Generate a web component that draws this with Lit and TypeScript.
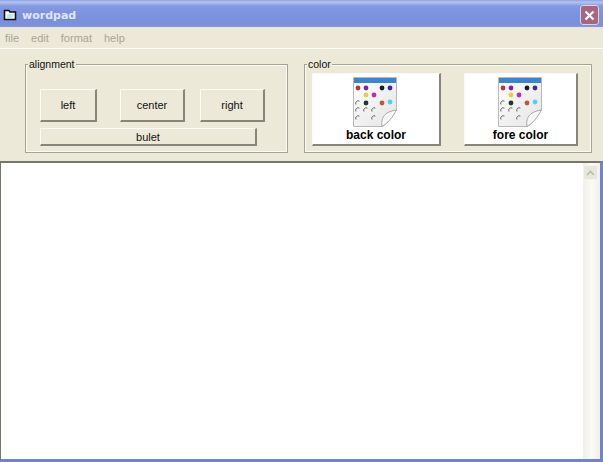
import { LitElement, html, css, svg } from "lit";
import { customElement } from "lit/decorators.js";

const dots = [
  [6, 11, "#b03a3a"], [14, 11, "#7a22b0"], [30, 11, "#1a1a1a"], [38, 11, "#3a2aa0"],
  [14, 18, "#e8cf3a"], [22, 18, "#c02ab0"], [14, 26, "#1f3a2a"], [30, 26, "#c0583a"], [38, 25, "#45d8e8"],
] as const;
const rings = [[6, 26], [6, 33], [14, 33], [22, 33], [6, 41], [22, 41]];

function paletteIcon() {
  return svg`<svg class="icon" width="46" height="51" viewBox="0 0 46 51">
    <defs><linearGradient id="pg" x1="0" y1="0" x2="1" y2="1"><stop offset="0" stop-color="#ffffff"/><stop offset="1" stop-color="#e4e4e4"/></linearGradient></defs>
    <path d="M1.5 0.5H44.5V33L31 49.5H1.5Z" fill="url(#pg)" stroke="#b8b8b8"/>
    <rect x="2" y="1" width="42" height="5" fill="#3a84d0"/>
    ${dots.map(([x, y, c]) => svg`<circle cx=${x} cy=${y} r="2.4" fill=${c}/>`)}
    ${rings.map(([x, y]) => svg`<path d="M${x - 2} ${y + 1.5}a2.5 2.5 0 0 1 3.4-3.4" fill="none" stroke="#666" stroke-width="1"/>`)}
    <path d="M30 49.5C29 42 31 35 44.5 33C40 41 36 46 30 49.5Z" fill="#f8f8f8" stroke="#a8a8a8"/>
  </svg>`;
}

@customElement("app-root")
export class AppRoot extends LitElement {
  static styles = css`
    :host {
      display: flex;
      flex-direction: column;
      width: 603px;
      height: 462px;
      box-sizing: border-box;
      background: #ece9d8;
      font-family: "Liberation Sans", Arial, sans-serif;
      font-size: 11px;
      color: #111;
      overflow: hidden;
    }
    .title {
      height: 28px;
      flex: none;
      display: flex;
      align-items: center;
      gap: 5px;
      padding: 2px 4px 0 3px;
      box-sizing: border-box;
      background: linear-gradient(180deg, #8fa3e6 0%, #b3c2f0 8%, #8398e2 22%, #7b91de 60%, #7a90dc 90%, #90a3e3 100%);
    }
    .title-text {
      flex: 1;
      color: #dfe6f8;
      font: bold 11px "DejaVu Sans", Verdana, sans-serif;
    }
    .close {
      width: 19px;
      height: 20px;
      border-radius: 3px;
      border: 1px solid #d9d3e6;
      background: #a9647f;
      display: flex;
      align-items: center;
      justify-content: center;
      box-sizing: border-box;
    }
    .menu {
      height: 20px;
      flex: none;
      display: flex;
      align-items: center;
      gap: 12px;
      padding: 0 0 0 5px;
      color: #a8a694;
      border-bottom: 1px solid #fbfaf3;
      box-shadow: 0 -1px 0 #e6e3d2;
    }
    .tools {
      height: 112px;
      flex: none;
      display: flex;
      gap: 16px;
      padding: 9px 0 0 25px;
      box-sizing: border-box;
    }
    .group {
      position: relative;
      margin: 6px 0 0;
      border: 1px solid #a5a393;
      outline: 1px solid #fbfaf3;
      outline-offset: -2px;
      height: 89px;
      box-sizing: border-box;
    }
    .legend {
      position: absolute;
      top: -7px;
      left: 2px;
      background: #ece9d8;
      padding: 0 1px;
      line-height: 13px;
      font-size: 10.5px;
    }
    .g1 { width: 263px; padding: 24px 15px 0 14px; }
    .g2 { width: 288px; padding: 8px 13px 0 7px; display: flex; justify-content: space-between; }
    .row { display: flex; gap: 23px; }
    .row .b2 { width: 65px; }
    .row .b3 { width: 65px; margin-left: -8px; }
    button {
      font: inherit;
      color: #111;
      background: #ece9d8;
      border: none;
      border-top: 1px solid #fbfaf3;
      border-left: 1px solid #fbfaf3;
      border-right: 2px solid #86857a;
      border-bottom: 2px solid #86857a;
      padding: 0;
      box-sizing: border-box;
    }
    .b1 { width: 57px; height: 33px; }
    .b2, .b3 { height: 33px; }
    .bulet { display: block; width: 217px; height: 18px; margin-top: 6px; }
    .pic {
      background: #fff;
      height: 73px;
      display: flex;
      flex-direction: column;
      align-items: center;
      font-weight: bold;
      font-size: 12px;
      color: #000;
    }
    .back { width: 129px; }
    .fore { width: 114px; }
    .icon { display: block; margin: 3px 2px 0 0; flex: none; }
    .pic span { line-height: 14px; }
    .edit {
      flex: 1;
      min-height: 0;
      display: flex;
      justify-content: flex-end;
      background: #fff;
      border-top: 2px solid #77766a;
      border-left: 1px solid #77766a;
      border-right: 3px solid #6f83d6;
      border-bottom: 3px solid #6f83d6;
      box-sizing: border-box;
    }
    .scroll {
      width: 17px;
      background: linear-gradient(90deg, #f0eee8, #fbfaf7 50%, #f1efe9);
      padding-top: 2px;
      box-sizing: border-box;
    }
    .up {
      height: 15px;
      width: 15px;
      background: #e6e8dc;
      border: 1px solid #f4f4ec;
      box-sizing: border-box;
      display: flex;
      align-items: center;
      justify-content: center;
    }
  `;

  render() {
    return html`
      <div class="title">
        <svg width="14" height="14" viewBox="0 0 14 14">
          <path d="M1.5 2.5H6L7 4H12.5V11.5H1.5Z" fill="#fff" stroke="#111" stroke-width="1.6"/>
          <path d="M4 6H11L9 10H4Z" fill="#bfe8e8"/>
        </svg>
        <span class="title-text">wordpad</span>
        <div class="close">
          <svg width="11" height="11" viewBox="0 0 11 11"><path d="M1.5 1.5L9.5 9.5M9.5 1.5L1.5 9.5" stroke="#fff" stroke-width="2.2"/></svg>
        </div>
      </div>
      <div class="menu"><span>file</span><span>edit</span><span>format</span><span>help</span></div>
      <div class="tools">
        <div class="group g1">
          <span class="legend">alignment</span>
          <div class="row">
            <button class="b1">left</button>
            <button class="b2">center</button>
            <button class="b3">right</button>
          </div>
          <button class="bulet">bulet</button>
        </div>
        <div class="group g2">
          <span class="legend">color</span>
          <button class="pic back">${paletteIcon()}<span>back color</span></button>
          <button class="pic fore">${paletteIcon()}<span>fore color</span></button>
        </div>
      </div>
      <div class="edit">
        <div class="scroll">
          <div class="up">
            <svg width="9" height="6" viewBox="0 0 9 6"><path d="M1 5L4.5 1.5L8 5" fill="none" stroke="#b9bcae" stroke-width="1.6"/></svg>
          </div>
        </div>
      </div>
    `;
  }
}
